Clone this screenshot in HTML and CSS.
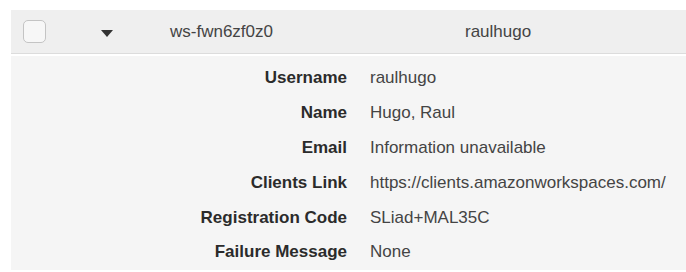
FILE: index.html
```html
<!DOCTYPE html>
<html lang="en">
<head>
<meta charset="UTF-8" />
<title>WorkSpaces</title>
<link rel="stylesheet" href="styles.css">
</head>
<body>
<div class="table">
  <div class="row">
    <span class="check"></span>
    <span class="caret"></span>
    <span class="ws-id">ws-fwn6zf0z0</span>
    <span class="user">raulhugo</span>
  </div>

  <div class="details">
    <div class="label">Username</div><div class="value">raulhugo</div>
    <div class="label">Name</div><div class="value">Hugo, Raul</div>
    <div class="label">Email</div><div class="value">Information unavailable</div>
    <div class="label">Clients Link</div><div class="value">https://clients.amazonworkspaces.com/</div>
    <div class="label">Registration Code</div><div class="value">SLiad+MAL35C</div>
    <div class="label">Failure Message</div><div class="value">None</div>
  </div>
</div>
</body>
</html>
```

FILE: styles.css
```css
body {
  margin: 0;
  background: #fff;
  font-family: "Liberation Sans", Arial, sans-serif;
  font-size: 17px;
  color: #444;
}
.table {
  margin: 10px 0 0 11px;
}
.row {
  display: flex;
  align-items: center;
  height: 43px;
  background: #efefef;
  border-bottom: 1px solid #dcdcdc;
}
.check {
  width: 21px;
  height: 21px;
  margin-left: 12px;
  border: 1px solid #c4c4c4;
  border-radius: 5px;
  background: #f7f7f7;
}
.caret {
  width: 0;
  height: 0;
  margin: 3px 0 0 55px;
  border-left: 6px solid transparent;
  border-right: 6px solid transparent;
  border-top: 7px solid #333;
}
.ws-id {
  margin-left: 57px;
}
.user {
  margin-left: 192px;
}
.details {
  margin-top: 2px;
  padding-top: 5px;
  height: 209px;
  background: #f5f5f5;
  display: grid;
  grid-template-columns: 336px 1fr;
  grid-auto-rows: 34.8px;
  column-gap: 23px;
  align-items: center;
}
.label {
  text-align: right;
  font-weight: bold;
  color: #2b2b2b;
}
```
